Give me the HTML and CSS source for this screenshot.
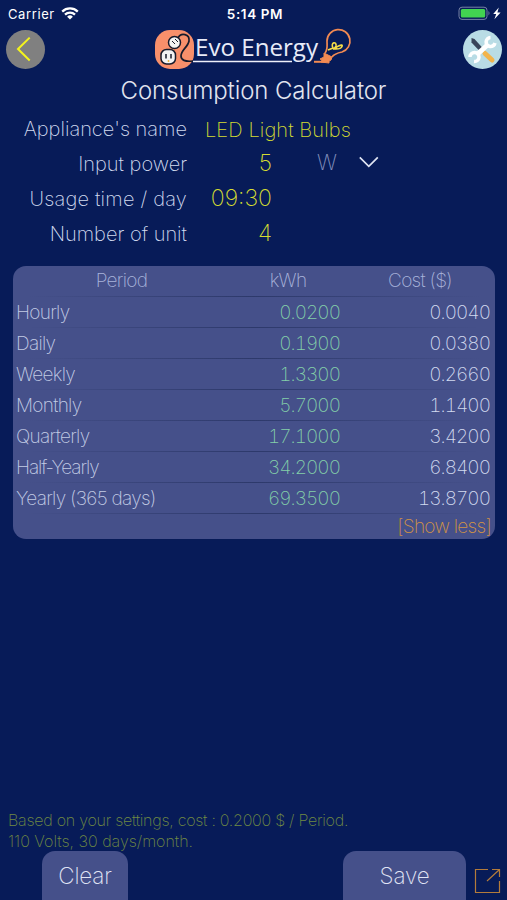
FILE: index.html
```html
<!DOCTYPE html>
<html>
<head>
    <meta charset="utf-8">
    <title>Evo Energy - Consumption Calculator</title>
    <link rel="stylesheet" href="styles.css">
</head>
<body>
    <div class="app">
        <div class="status-bar">
            <div class="carrier">
                <span>Carrier</span>
                <svg width="18" height="13" viewBox="0 0 18 13" fill="none" stroke="#fff" stroke-width="2.3">
                    <path d="M1.2 4.6a11.2 11.2 0 0 1 15.6 0M4 7.7a7.2 7.2 0 0 1 10 0"/>
                    <path d="M9 12.5L6.1 9.7a4.2 4.2 0 0 1 5.8 0z" fill="#fff" stroke="none"/>
                </svg>
            </div>
            <div class="clock">5:14 PM</div>
            <div class="battery">
                <svg width="44" height="15" viewBox="0 0 44 15">
                    <rect x="1" y="1.2" width="28" height="12.2" rx="3" fill="none" stroke="#7783a5"/>
                    <rect x="2.8" y="3" width="24.4" height="8.6" rx="1.5" fill="#42d451"/>
                    <path d="M30.5 5q2 2.2 0 4.4z" fill="#7783a5"/>
                    <path d="M40.8 1.5L35.2 8h3l-1.8 5.2L42.6 6.6h-3.2z" fill="#fff"/>
                </svg>
            </div>
        </div>

        <div class="header">
            <button class="round-button back-button">
                <svg width="39" height="39" viewBox="0 0 39 39" fill="none" stroke="#f4f41c" stroke-width="2">
                    <path d="M23.7 7.6L12 19l11.7 11.5"/>
                </svg>
            </button>
            <div class="logo">
                <svg width="200" height="44" viewBox="0 0 200 44">
                    <rect x="1" y="2" width="39" height="39" rx="15" fill="#f8906b"/>
                    <!-- cord -->
                    <path d="M24 10c3-6 12-4 11 3c-1 6-8 9-8 15c0 4 4 6 12 5" fill="none" stroke="#171b2b" stroke-width="1.7"/>
                    <!-- plug and socket -->
                    <g fill="#f3f3f3" stroke="#171b2b" stroke-width="1.5">
                        <circle cx="20.500" cy="14.500" r="6"/>
                        <path d="M18 13l3 3M21 11l3 3" fill="none" stroke-width="1"/>
                        <rect x="7" y="21.500" width="14.500" height="14.500" rx="5.500"/>
                        <path d="M12 26v4.500M17 26v4.500" fill="none"/>
                        <path d="M14.500 32v2" stroke="#e8b84a"/>
                    </g>
                    <path d="M39 33.500h99" stroke="#eef0fa" stroke-width="1.600"/>
                    <text class="logo-text" x="41" y="27.500" textLength="123" lengthAdjust="spacingAndGlyphs">Evo Energy</text>
                    <!-- bulb -->
                    <g fill="none" stroke="#f28a52" stroke-width="1.700">
                        <path d="M160 33.800h12" stroke-width="2"/>
                        <path d="M171 25C174 21 173 18 173 13A11.500 11.500 0 1 1 188 24C183 25 180 26 178 29"/>
                        <path d="M170 25l8 4-1 3-2 1v2l-8-1 1-2-2-1 4-2z" fill="#f28a52" stroke-width="1"/>
                    </g>
                    <path d="M174 22l5-2c-3-6 4-7 3-2q-1 2-3 3h3q5 0 6-2.500t-3.500-.5-1 3" fill="none" stroke="#f4dc48" stroke-width="1.600"/>
                </svg>
            </div>
            <button class="round-button tools-button">
                <svg width="39" height="39" viewBox="0 0 39 39">
                    <path d="M8.500 8l3 1 9 10-3 3-9-9.500z" fill="#394458"/>
                    <path d="M22 23.500l7 6.500" stroke="#f2b44c" stroke-width="5" stroke-linecap="round"/>
                    <!-- wrench -->
                    <path d="M14 24.500L25 14.500" stroke="#fff" stroke-width="5"/>
                    <path d="M27.500 7.500A4.500 4.500 0 1 0 32 13M11 31.500A4.500 4.500 0 1 0 7 27" fill="none" stroke="#fff" stroke-width="3.500"/>
                </svg>
            </button>
        </div>

        <h1 class="title">Consumption Calculator</h1>

        <div class="form">
            <div class="form-row">
                <label>Appliance's name</label>
                <span class="value value-name">LED Light Bulbs</span>
            </div>
            <div class="form-row">
                <label>Input power</label>
                <span class="value">5</span>
                <span class="unit">W</span>
                <svg width="20" height="12" viewBox="0 0 20 12" fill="none" stroke="#dfe4f2" stroke-width="1.7">
                    <path d="M.8 1.300l9 9 9-9"/>
                </svg>
            </div>
            <div class="form-row">
                <label class="wide">Usage time / day</label>
                <span class="value">09:30</span>
            </div>
            <div class="form-row">
                <label>Number of unit</label>
                <span class="value">4</span>
            </div>
        </div>

        <div class="results">
            <div class="row head"><span>Period</span><span>kWh</span><span>Cost ($)</span></div>
            <div class="row"><span>Hourly</span><span class="kwh">0.0200</span><span class="cost">0.0040</span></div>
            <div class="row"><span>Daily</span><span class="kwh">0.1900</span><span class="cost">0.0380</span></div>
            <div class="row"><span>Weekly</span><span class="kwh">1.3300</span><span class="cost">0.2660</span></div>
            <div class="row"><span>Monthly</span><span class="kwh">5.7000</span><span class="cost">1.1400</span></div>
            <div class="row"><span>Quarterly</span><span class="kwh">17.1000</span><span class="cost">3.4200</span></div>
            <div class="row"><span class="half">Half-Yearly</span><span class="kwh">34.2000</span><span class="cost">6.8400</span></div>
            <div class="row"><span>Yearly (365 days)</span><span class="kwh">69.3500</span><span class="cost">13.8700</span></div>
            <div class="show-less">[Show less]</div>
        </div>

        <div class="note">
            <div class="note-cost">Based on your settings, cost : 0.2000 $ / Period.</div>
            <div>110 Volts, 30 days/month.</div>
        </div>

        <div class="footer">
            <button class="tab-button clear-button">Clear</button>
            <button class="tab-button save-button">Save</button>
            <svg class="share" width="28" height="28" viewBox="0 0 28 28" fill="none" stroke="#b37b3b" stroke-width="1.200">
                <path d="M14 2.500H1.500v23h24V14M13 14L25.500 2.500M18 2.500h7.500V10"/>
            </svg>
        </div>
    </div>
</body>
</html>
```
FILE: styles.css
```css
* {
    box-sizing: border-box;
}
body {
    margin: 0;
    background-color: #071b58;
    font-family: Inter, "Liberation Sans", sans-serif;
    font-weight: 200;
    color: #d3dbf0;
}
button {
    border: none;
    padding: 0;
    font-family: inherit;
    font-weight: inherit;
    color: inherit;
}
svg {
    display: block;
}
.app {
    height: 900px;
    display: flex;
    flex-direction: column;
    overflow: hidden;
    white-space: nowrap;
}
.status-bar {
    height: 27px;
    padding: 0 5px 0 8px;
    display: grid;
    grid-template-columns: 1fr auto 1fr;
    align-items: center;
    font-size: 13px;
    font-weight: 400;
    color: #ffffff;
}
.carrier {
    display: flex;
    align-items: center;
    gap: 6px;
    letter-spacing: 0.6px;
}
.clock {
    font-weight: 600;
    font-size: 13.5px;
    letter-spacing: 0.6px;
}
.battery {
    justify-self: end;
}
.header {
    height: 45px;
    padding: 0 5px 0 6px;
    display: flex;
    justify-content: space-between;
    align-items: center;
}
.round-button {
    width: 39px;
    height: 39px;
    border-radius: 50%;
}
.back-button {
    background-color: #808080;
}
.tools-button {
    background-color: #b9dce5;
}
.logo-text {
    font-family: "Open Sans", sans-serif;
    font-size: 24px;
    font-weight: 400;
    fill: #e8ebf8;
}
.title {
    margin: 0;
    height: 39px;
    line-height: 37px;
    text-align: center;
    font-size: 24px;
    font-weight: 300;
    letter-spacing: -0.1px;
    color: #e1e4ef;
}
.form {
    margin-top: 1px;
}
.form-row {
    height: 35px;
    display: grid;
    grid-template-columns: 187px 67px 47px 20px;
    column-gap: 18px;
    align-items: center;
}
.form-row svg {
    margin: -5px 0 0 4px;
}
.form label {
    text-align: right;
    font-size: 20px;
    line-height: 35px;
}
.form label.wide {
    letter-spacing: 0.2px;
}
.value {
    text-align: right;
    font-size: 23px;
    line-height: 33px;
    height: 35px;
    color: #d4dc32;
}
.value-name {
    text-align: left;
    font-size: 20px;
    line-height: 36px;
    letter-spacing: 0.1px;
}
.unit {
    text-align: right;
    font-size: 21px;
    line-height: 31px;
    height: 35px;
    color: #8290bc;
}
.results {
    margin: 14px 12px 0 13px;
    height: 273px;
    flex-shrink: 0;
    border-radius: 13px;
    background-color: #45508a;
    font-size: 19px;
    letter-spacing: -0.7px;
    color: #c3cce5;
    overflow: hidden;
}
.row {
    height: 31px;
    padding: 0 4px 0 3px;
    display: grid;
    grid-template-columns: 213px 112px 1fr;
    align-items: center;
    background: linear-gradient(90deg, transparent 3%, #2d396b 50%, transparent 97%) bottom / 100% 1px no-repeat;
}
.half {
    letter-spacing: -1.1px;
}
.kwh,
.cost {
    text-align: right;
    font-variant-numeric: tabular-nums;
    letter-spacing: -0.95px;
    padding-right: 1px;
}
.kwh {
    color: #83cfa9;
}
.cost {
    color: #d3dbf0;
}
.head {
    padding-right: 0;
    padding-bottom: 2px;
    grid-template-columns: 211px 122px 142px;
    text-align: center;
    color: #a9b4db;
}
.show-less {
    padding-right: 4px;
    line-height: 25px;
    text-align: right;
    color: #d29345;
}
.note {
    margin-top: auto;
    padding-left: 8px;
    font-size: 16px;
    line-height: 21px;
    color: #718b43;
}
.note-cost {
    letter-spacing: -0.25px;
}
.footer {
    height: 49px;
    display: flex;
    align-items: flex-end;
    padding-left: 42px;
    margin-top: -1px;
}
.tab-button {
    height: 49px;
    border-radius: 13px 13px 0 0;
    background-color: #45508a;
    font-size: 22.5px;
    letter-spacing: -0.2px;
    color: #e1e5f5;
}
.clear-button {
    width: 86px;
}
.save-button {
    width: 123px;
    margin-left: 215px;
}
.share {
    margin: 0 0 5px 8px;
}
```
